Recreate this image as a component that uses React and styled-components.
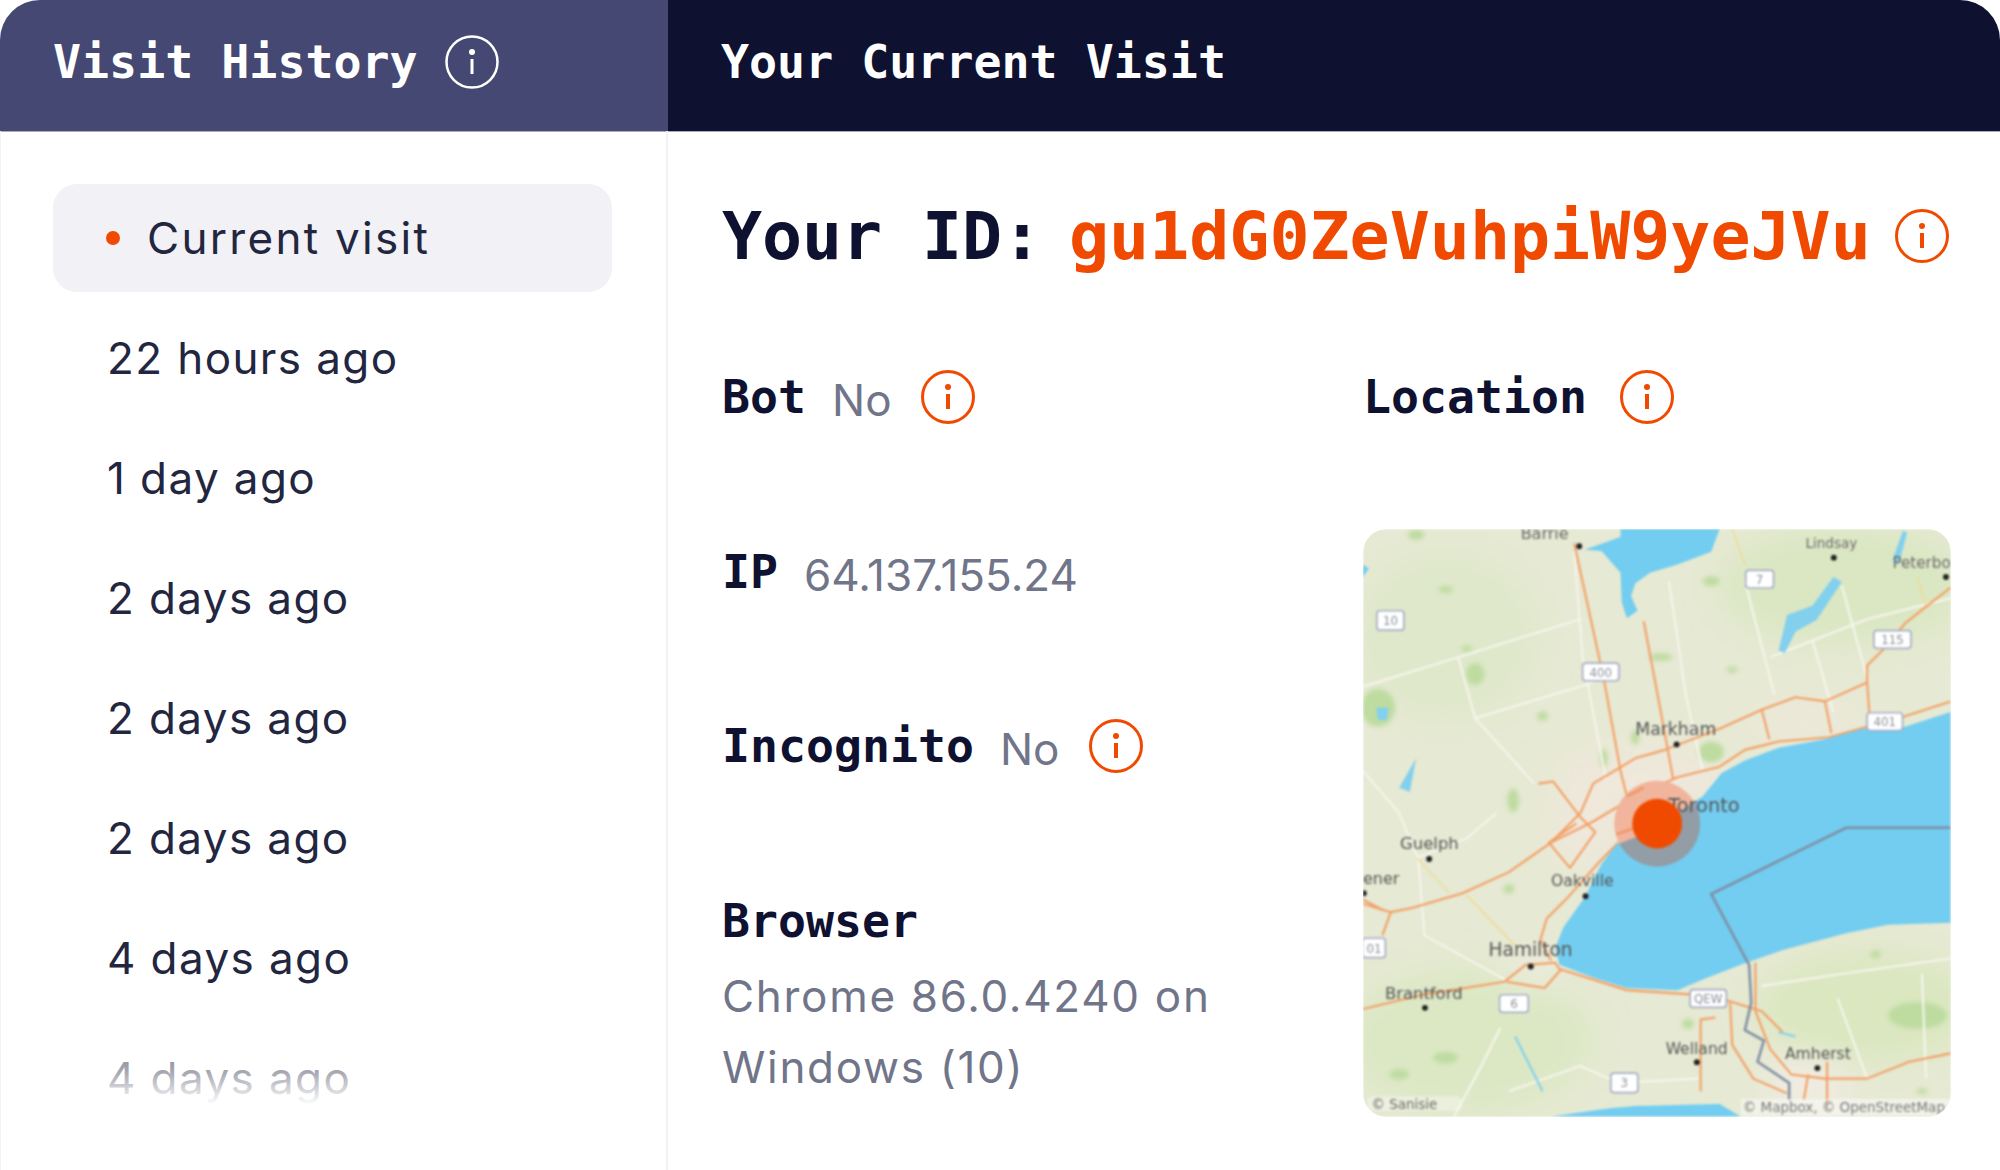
import React from "react";
import styled, { createGlobalStyle } from "styled-components";

const visits = ["22 hours ago", "1 day ago", "2 days ago", "2 days ago", "2 days ago", "4 days ago", "4 days ago"];

const roads = [
  "M555 80 L590 240 L625 400 L665 620 L680 680",
  "M720 265 L755 450 L790 640",
  "M1448 455 L1340 490 L1250 515 L1160 540 L1040 550 L960 570 L900 610 L800 635 L700 680 L600 740 L500 790 L400 860 L290 910 L170 945 L120 955 L54 935",
  "M1250 410 L1150 455 L1080 445 L1000 475 L900 520 L770 570 L700 590 L600 650 L570 720 L500 790",
  "M1000 475 L1018 545 M1150 455 L1165 530 M1250 410 L1255 480",
  "M1448 185 L1390 230 L1340 270 L1290 330 L1250 370 L1250 410",
  "M470 650 L505 645 L570 730 L605 765 L545 850 L495 790 L560 745",
  "M660 790 L620 830 L540 920 L490 970 L475 1020 L500 1070",
  "M54 1185 L200 1150 L390 1120 L440 1080 L510 1075 L520 1090 L680 1140 L830 1150 L920 1165 L1000 1190 L1050 1240",
  "M395 1120 L485 1135 L525 1090",
  "M855 1380 L855 1210 L890 1205 M925 1170 L930 1270 L980 1350 L1060 1385",
  "M985 1075 L985 1190 L1020 1280 L1070 1340 L1150 1350 L1250 1350 L1350 1310 L1448 1290",
  "M1110 1340 L1100 1400 M1155 1310 L1155 1420",
  "M120 955 L100 1010 M54 925 L100 950",
];

const paleRoads = [
  "M54 420 L280 350 L570 260",
  "M320 495 L600 410 M280 350 L320 495 L460 650",
  "M555 100 L575 350 L630 640",
  "M780 170 L820 440 L860 620",
  "M960 170 L1030 440 M1020 350 L1250 260 L1448 210 M1120 310 L1170 480 M1190 180 L1250 400",
  "M54 620 L140 720 L185 830 L200 1010 M200 1010 L400 1120",
  "M370 720 L300 780 L185 825",
  "M380 1230 L340 1310 L270 1440",
  "M1000 1130 L1200 1100 L1448 1065 M1180 1160 L1250 1350 M1380 1100 L1390 1350",
  "M400 1380 L570 1320 L660 1360 L850 1350",
];

const greens = [
  [90, 470, 40, 45], [320, 390, 22, 26], [880, 575, 30, 25], [1370, 1200, 70, 32], [825, 1220, 14, 12],
  [180, 60, 20, 12], [250, 190, 18, 8], [410, 690, 14, 28], [760, 350, 28, 9], [625, 590, 9, 24],
  [480, 490, 13, 11], [1270, 1055, 13, 9], [1380, 1380, 13, 7], [400, 900, 13, 11], [300, 330, 13, 7],
  [880, 170, 20, 12], [930, 380, 14, 7], [700, 540, 10, 18], [250, 1300, 30, 14], [140, 1340, 24, 12],
];

const shields = [
  [119, 263, 64, 46, "10"], [618, 385, 86, 42, "400"], [995, 165, 66, 42, "7"], [1310, 308, 88, 42, "115"],
  [1292, 503, 84, 42, "401"], [80, 1040, 54, 46, "01"], [412, 1172, 68, 42, "6"], [873, 1160, 86, 42, "QEW"],
  [674, 1360, 64, 46, "3"],
];

const places = [
  ["Barrie", 428, 70, 38, "#6a6a6a"], ["Lindsay", 1104, 92, 32, "#6a6a6a"], ["Peterbo", 1310, 138, 36, "#6a6a6a"],
  ["Markham", 700, 534, 41, "#555"], ["Toronto", 778, 718, 46, "#555"], ["Guelph", 142, 806, 39, "#555"],
  ["ener", 54, 888, 38, "#555"], ["Oakville", 500, 892, 37, "#555"], ["Hamilton", 352, 1058, 44, "#555"],
  ["Brantford", 106, 1160, 39, "#555"], ["Welland", 772, 1292, 37, "#555"], ["Amherst", 1055, 1304, 37, "#555"],
];

const towns = [
  [567, 87], [1171, 114], [1437, 160], [798, 557], [211, 829], [56, 910], [582, 917], [452, 1084], [201, 1182], [846, 1311], [1132, 1325],
];

const lakePath =
  "M1448 480 L1340 515 L1240 520 L1150 545 L1040 565 L960 595 L905 625 L860 680 L800 720 L720 770 L655 795 L620 840 L580 920 L530 990 L510 1040 L520 1080 L600 1110 L680 1135 L800 1140 L860 1115 L950 1080 L1050 1045 L1200 1005 L1300 985 L1448 980 Z";

const InfoIcon = ({ color = "#f04a00", thin }) => (
  <svg width="54" height="54" viewBox="0 0 54 54" fill="none">
    <circle cx="27" cy="27" r="25.5" stroke={color} strokeWidth={thin ? 2.5 : 3} />
    <circle cx="27" cy="17" r="3" fill={color} />
    <rect x={thin ? 25.5 : 25} y="24" width={thin ? 3 : 4} height="15" fill={color} />
  </svg>
);

const MapDrawing = () => (
  <MapSvg viewBox="54 46 1395 1395">
    <defs>
      <clipPath id="lake-clip"><path d={lakePath} /></clipPath>
      <filter id="soft" x="-30%" y="-30%" width="160%" height="160%"><feGaussianBlur stdDeviation="40" /></filter>
      <filter id="patch" x="-50%" y="-50%" width="200%" height="200%"><feGaussianBlur stdDeviation="5" /></filter>
    </defs>
    <rect x="54" y="46" width="1395" height="1395" fill="#e6e9d3" />
    <g filter="url(#soft)">
      <ellipse cx="300" cy="1260" rx="300" ry="170" fill="#dce8c4" />
      <ellipse cx="1200" cy="180" rx="300" ry="140" fill="#dae7c2" />
      <ellipse cx="250" cy="300" rx="220" ry="200" fill="#dfe8ca" />
      <ellipse cx="1250" cy="1180" rx="260" ry="130" fill="#dae7bf" />
      <ellipse cx="720" cy="640" rx="210" ry="80" fill="#efe8dc" />
      <ellipse cx="580" cy="760" rx="90" ry="90" fill="#efe8dc" />
      <ellipse cx="1110" cy="1360" rx="100" ry="60" fill="#f2ece4" />
      <ellipse cx="455" cy="1090" rx="60" ry="35" fill="#f2ece4" />
      <ellipse cx="1100" cy="500" rx="160" ry="35" fill="#efe8dc" />
    </g>
    <g filter="url(#patch)">
      {greens.map(([cx, cy, rx, ry], i) => (
        <ellipse key={i} cx={cx} cy={cy} rx={rx} ry={ry} fill="#bedca0" />
      ))}
    </g>
    {paleRoads.map((d, i) => (
      <path key={i} d={d} fill="none" stroke="#f6f5ec" strokeWidth="5" />
    ))}
    <path d="M180 825 L260 910 M300 915 L420 1040 M930 46 L960 130 M1370 160 L1390 230" fill="none" stroke="#f1d98a" strokeWidth="3" />
    {roads.map((d, i) => (
      <path key={i} d={d} fill="none" stroke="#f39f64" strokeWidth="5" strokeLinejoin="round" />
    ))}
    <circle cx="752" cy="745" r="102" fill="#f0b59c" />
    <path d="M680 680 L720 660 M655 770 L700 755" fill="none" stroke="#f3915e" strokeWidth="5" />
    <path d={lakePath} fill="#72cdf1" />
    <path d="M580 95 L665 65 L665 46 L900 46 L880 100 L800 130 L735 150 L700 175 L690 205 L705 240 L680 258 L668 220 L665 150 L620 98 Z" fill="#72cdf1" />
    <path d="M1040 335 L1060 250 L1120 228 L1170 160 L1190 172 L1130 262 L1080 290 L1055 340 Z M1310 120 L1335 50 L1345 55 L1325 130 Z M140 660 L180 590 L165 670 Z M85 470 L115 470 L110 500 L90 500 Z" fill="#82d0ee" />
    <path d="M500 1440 L640 1420 L700 1415 L900 1410 L950 1440 Z M54 130 L68 140 L54 160 Z" fill="#72cdf1" />
    <path d="M415 1250 L450 1320 L480 1380 M1040 1240 L1080 1250" fill="none" stroke="#82d0ee" strokeWidth="5" />
    <path
      d="M1448 755 L1200 755 L880 912 L970 1080 L975 1170 L960 1235 L1005 1260 L990 1310 L1065 1360 L1065 1400"
      fill="none"
      stroke="#7f8ea3"
      strokeWidth="6"
    />
    <g clipPath="url(#lake-clip)">
      <circle cx="752" cy="745" r="102" fill="#939da5" />
    </g>
    {towns.map(([cx, cy], i) => (
      <circle key={i} cx={cx} cy={cy} r="7" fill="#222" />
    ))}
    {places.map(([name, x, y, size, color]) => (
      <MapLabel key={name} x={x} y={y} fontSize={size} fill={color}>{name}</MapLabel>
    ))}
    {shields.map(([cx, cy, w, h, label], i) => (
      <g key={i}>
        <rect x={cx - w / 2} y={cy - h / 2} width={w} height={h} rx="7" fill="#fff" stroke="#a6adc4" strokeWidth="4" />
        <MapLabel x={cx} y={cy + 11} fontSize="28" fill="#8a8f9c" textAnchor="middle">{label}</MapLabel>
      </g>
    ))}
    <circle cx="752" cy="745" r="59" fill="#f04a00" />
    <rect x="64" y="1392" width="225" height="34" rx="14" fill="#fff" opacity="0.35" />
    <MapLabel x="74" y="1423" fontSize="32" fill="#6a6a6a">© Sanisie</MapLabel>
    <rect x="950" y="1398" width="499" height="40" fill="#fff" opacity="0.45" />
    <MapLabel x="955" y="1428" fontSize="32" fill="#77787c">© Mapbox, © OpenStreetMap</MapLabel>
  </MapSvg>
);

const App = () => (
  <>
    <GlobalStyle />
    <Card>
      <HeaderBar>
        <HeaderCell $side>
          <HeaderTitle>Visit History</HeaderTitle>
          <InfoIcon color="#fff" thin />
        </HeaderCell>
        <HeaderCell>
          <HeaderTitle>Your Current Visit</HeaderTitle>
        </HeaderCell>
      </HeaderBar>
      <Body>
        <Sidebar>
          <VisitList>
            <VisitRow $active>
              <Dot />
              Current visit
            </VisitRow>
            {visits.map((v, i) => (
              <VisitRow key={i}>{v}</VisitRow>
            ))}
          </VisitList>
          <Fade />
        </Sidebar>
        <Main>
          <IdRow>
            <IdLabel>Your ID:</IdLabel>
            <IdValue>gu1dG0ZeVuhpiW9yeJVu</IdValue>
            <InfoIcon />
          </IdRow>
          <Facts>
            <FactColumn>
              <Fact>
                <Label>Bot</Label>
                <Value>No</Value>
                <InfoIcon />
              </Fact>
              <Fact>
                <Label>IP</Label>
                <Value>64.137.155.24</Value>
              </Fact>
              <Fact>
                <Label>Incognito</Label>
                <Value>No</Value>
                <InfoIcon />
              </Fact>
              <BrowserFact>
                <Label>Browser</Label>
                <BrowserValue>
                  Chrome 86.0.4240 on
                  <br />
                  Windows (10)
                </BrowserValue>
              </BrowserFact>
            </FactColumn>
            <LocationColumn>
              <Fact>
                <Label>Location</Label>
                <LocationIcon>
                  <InfoIcon />
                </LocationIcon>
              </Fact>
              <MapCard>
                <MapDrawing />
              </MapCard>
            </LocationColumn>
          </Facts>
        </Main>
      </Body>
    </Card>
  </>
);

const GlobalStyle = createGlobalStyle`
  html, body {
    margin: 0;
    padding: 0;
    background: #fff;
  }
`;

const Card = styled.div`
  width: 2000px;
  height: 1170px;
  overflow: hidden;
  display: flex;
  flex-direction: column;
  color: #0e1130;
  font-family: Inter, "Noto Sans", sans-serif;
`;

const HeaderBar = styled.div`
  display: grid;
  grid-template-columns: 668px 1fr;
  height: 131px;
  flex: none;
  border-radius: 40px 40px 0 0;
  overflow: hidden;
  box-shadow: 0 1px 0 #a9abbd;
`;

const HeaderCell = styled.div`
  display: flex;
  align-items: center;
  gap: 27px;
  padding: 0 0 8px 53px;
  background: ${(p) => (p.$side ? "#454872" : "#0e1130")};
`;

const HeaderTitle = styled.span`
  font-family: "DejaVu Sans Mono", monospace;
  font-size: 46.6px;
  font-weight: 700;
  color: #fff;
`;

const Body = styled.div`
  display: flex;
  flex: 1;
  min-height: 0;
`;

const Sidebar = styled.div`
  position: relative;
  width: 668px;
  flex: none;
  box-sizing: border-box;
  border-left: 1px solid #f3f3f6;
  border-right: 2px solid #f1f1f5;
  overflow: hidden;
`;

const VisitList = styled.div`
  display: flex;
  flex-direction: column;
  gap: 12px;
  padding: 53px 54px 0 52px;
`;

const VisitRow = styled.div`
  display: flex;
  align-items: center;
  flex: none;
  height: 108px;
  padding-left: ${(p) => (p.$active ? "53px" : "54px")};
  border-radius: 24px;
  font-size: 44px;
  font-weight: 400;
  letter-spacing: ${(p) => (p.$active ? "2.3px" : "1.4px")};
  color: #23263f;
  background: ${(p) => (p.$active ? "#f1f1f6" : "transparent")};
`;

const Dot = styled.span`
  width: 14px;
  height: 14px;
  margin-right: 27px;
  border-radius: 50%;
  background: #f04a00;
`;

const Fade = styled.div`
  position: absolute;
  left: 0;
  right: 0;
  bottom: 0;
  height: 130px;
  background: linear-gradient(to bottom, rgba(255, 255, 255, 0.4) 0%, rgba(255, 255, 255, 0.6) 25%, #fff 50%);
`;

const Main = styled.div`
  flex: 1;
  padding: 69px 50px 0 54px;
`;

const IdRow = styled.div`
  display: flex;
  align-items: center;
  height: 72px;
  font-family: "DejaVu Sans Mono", monospace;
  font-size: 66.6px;
  font-weight: 700;
  white-space: nowrap;
`;

const IdLabel = styled.span`
  margin-right: 27px;
  letter-spacing: -0.1px;
`;

const IdValue = styled.span`
  margin-right: 24px;
  color: #f04a00;
`;

const Facts = styled.div`
  display: grid;
  grid-template-columns: 641px 587px;
  margin-top: 98px;
`;

const FactColumn = styled.div`
  display: flex;
  flex-direction: column;
  gap: 120.5px;
`;

const Fact = styled.div`
  display: flex;
  align-items: center;
  height: 54px;
`;

const Label = styled.span`
  font-family: "DejaVu Sans Mono", monospace;
  font-size: 46.5px;
  font-weight: 700;
  color: #0e1130;
`;

const Value = styled.span`
  margin: 0 29px 0 26px;
  font-size: 44px;
  color: #71758a;
  position: relative;
  top: 3px;
`;

const BrowserFact = styled.div`
  display: flex;
  flex-direction: column;
  align-items: flex-start;
`;

const BrowserValue = styled.div`
  margin-top: 13px;
  font-size: 44px;
  line-height: 71px;
  letter-spacing: 1.7px;
  color: #71758a;
`;

const LocationColumn = styled.div`
  display: flex;
  flex-direction: column;
`;

const LocationIcon = styled.span`
  display: flex;
  margin-left: 33px;
`;

const MapCard = styled.div`
  width: 588px;
  height: 588px;
  margin-top: 105px;
  border-radius: 24px;
  overflow: hidden;
`;

const MapSvg = styled.svg`
  display: block;
  width: 100%;
  height: 100%;
  filter: blur(0.9px);
`;

const MapLabel = styled.text`
  font-family: "DejaVu Sans", sans-serif;
`;

export default App;
